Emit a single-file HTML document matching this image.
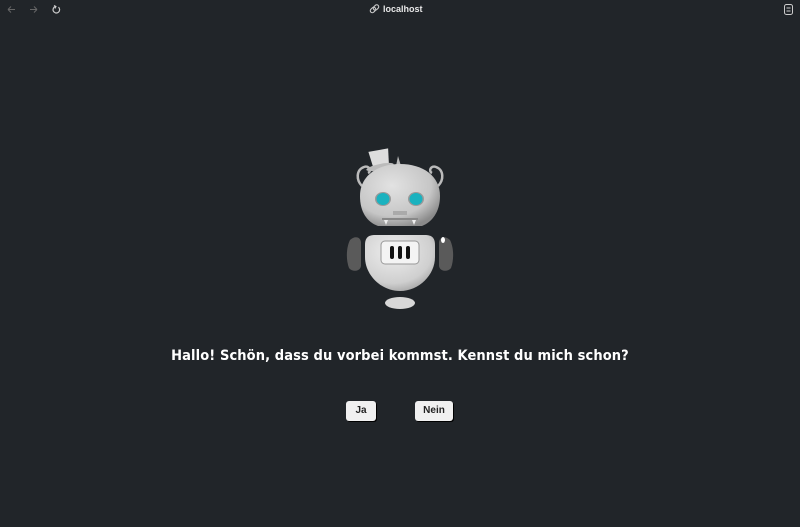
<!DOCTYPE html>
<html><head><meta charset="utf-8"><style>
html,body{margin:0;padding:0;width:800px;height:527px;background:#212529;overflow:hidden;font-family:"Liberation Sans",sans-serif}
.bar{position:absolute;left:0;top:0;width:800px;height:20px;background:#212529;color:#ddd}
.url{position:absolute;left:383px;top:4px;font-size:9px;font-weight:bold;color:#e8e8e8}
.msg{position:absolute;left:0;width:800px;top:348px;text-align:center;color:#fff;font-family:"DejaVu Sans Condensed","DejaVu Sans",sans-serif;font-weight:bold;font-size:14.5px;letter-spacing:0.1px}
.btn{position:absolute;top:401px;height:20px;background:#f0f0f0;border-radius:3px;box-shadow:1px 1px 0 #000;font-size:10px;font-weight:bold;color:#222;text-align:center;line-height:20px}
</style></head><body>
<div class="bar">
<svg width="800" height="20" style="position:absolute;left:0;top:0">
<g stroke="#666" stroke-width="1" fill="none"><path d="M8 9.5h7M8 9.5l3-3M8 9.5l3 3"/><path d="M30 9.5h7M37 9.5l-3-3M37 9.5l-3 3"/></g>
<path d="M58.5 7.2a3.3 3.3 0 1 1-3 -0.7" stroke="#ccc" stroke-width="1.2" fill="none"/><path d="M54 5.5l2 1-1 2" stroke="#ccc" stroke-width="1" fill="none"/>
<g stroke="#ccc" stroke-width="1.1" fill="none"><rect x="371" y="7" width="4" height="6" rx="2" transform="rotate(45 373 10)"/><rect x="374" y="4.5" width="4" height="6" rx="2" transform="rotate(45 376 7.5)"/></g>
<rect x="784.5" y="4.5" width="8" height="10" rx="2" stroke="#ccc" fill="none"/><path d="M786.5 8h4M786.5 11h4" stroke="#ccc"/>
</svg>
<div class="url">localhost</div>
</div>
<svg width="800" height="527" style="position:absolute;left:0;top:0">
<defs>
<radialGradient id="h" cx="0.4" cy="0.35" r="0.7"><stop offset="0" stop-color="#e2e2e2"/><stop offset="0.7" stop-color="#c6c6c6"/><stop offset="1" stop-color="#8a8a8a"/></radialGradient>
<radialGradient id="b" cx="0.4" cy="0.3" r="0.8"><stop offset="0" stop-color="#eee"/><stop offset="0.7" stop-color="#cfcfcf"/><stop offset="1" stop-color="#999"/></radialGradient>
</defs>
<g fill="none" stroke="#bbb" stroke-width="2.5">
<path d="M362 186c-6-6-6-16 2-19c5-2 8 4 4 6"/>
<path d="M438 186c6-6 6-16-2-19c-5-2-8 4-4 6"/>
</g>
<path d="M396 166l2-10 3 10z" fill="#bbb"/>
<path d="M370 150h20l-2 16h-16z" fill="#ddd" transform="rotate(-10 380 160)"/>
<ellipse cx="380" cy="167" rx="14" ry="3" fill="#bbb" transform="rotate(-12 380 167)"/>
<path d="M360 196c0-20 17-32 40-32s40 12 40 32c0 16-8 26-18 30h-44c-11-4-18-14-18-30z" fill="url(#h)"/>
<ellipse cx="383" cy="199" rx="8" ry="7" fill="#999"/><ellipse cx="383" cy="199" rx="6.5" ry="6" fill="#1ab2bf"/>
<ellipse cx="416" cy="199" rx="8" ry="7" fill="#999"/><ellipse cx="416" cy="199" rx="6.5" ry="6" fill="#1ab2bf"/>
<path d="M393 211h14v4h-14z" fill="#aaa"/>
<path d="M382 219h36" stroke="#888" stroke-width="2"/>
<path d="M384 220l2 5 2-5M412 220l2 5 2-5" fill="#eee"/>
<path d="M350 240c4-4 10-4 11 2v24c-1 6-9 6-12 2-3-8-3-20 1-28z" fill="#5a5a5a"/>
<path d="M450 240c-4-4-10-4-11 2v24c1 6 9 6 12 2 3-8 3-20-1-28z" fill="#5a5a5a"/>
<ellipse cx="443" cy="240" rx="2" ry="3" fill="#fff"/>
<path d="M365 245c0-8 4-10 10-10h50c6 0 10 2 10 10v12c0 18-16 34-35 34s-35-16-35-34z" fill="url(#b)"/>
<rect x="381" y="241" width="38" height="23" rx="4" fill="#f4f4f4" stroke="#999" stroke-width="1"/>
<rect x="390" y="246" width="4" height="13" rx="2" fill="#111"/><rect x="398" y="246" width="4" height="13" rx="2" fill="#111"/><rect x="406" y="246" width="4" height="13" rx="2" fill="#111"/>
<ellipse cx="400" cy="303" rx="15" ry="6" fill="#d8d8d8"/>
</svg>
<div class="msg">Hallo! Schön, dass du vorbei kommst. Kennst du mich schon?</div>
<div class="btn" style="left:346px;width:30px">Ja</div>
<div class="btn" style="left:415px;width:38px">Nein</div>
</body></html>
